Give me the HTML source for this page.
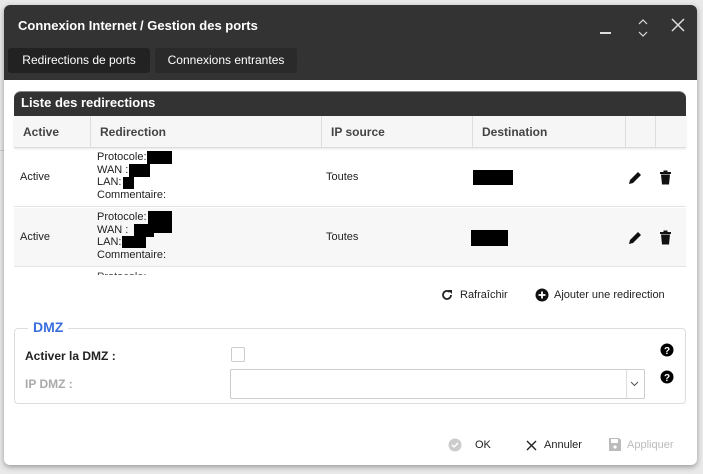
<!DOCTYPE html>
<html><head><style>
*{box-sizing:border-box;margin:0;padding:0}
body{width:703px;height:474px;background:#e9e9e9;font-family:"Liberation Sans",Arial,sans-serif;position:relative;overflow:hidden;font-size:12px;color:#222}
.a{position:absolute}
.dlg{left:4px;top:5px;width:693px;height:460px;background:#fff;border-radius:6px;box-shadow:0 2px 6px rgba(0,0,0,.35);overflow:hidden}
.blk{background:#000}
</style></head><body>
<div class="a" style="left:0;top:150px;width:4px;height:1px;background:#ccc"></div>
<div class="a dlg">
 <div class="a" style="left:0;top:0;width:693px;height:75px;background:#333"></div>
 <div class="a" style="left:14px;top:13px;color:#fff;font-weight:bold;font-size:13px">Connexion Internet / Gestion des ports</div>
 <div class="a" style="left:596px;top:27px;width:11px;height:1.5px;background:#ddd"></div>
 <svg class="a" style="left:633px;top:13px" width="12" height="20"><path d="M2 6l4-4 4 4M2 14l4 4 4-4" stroke="#ddd" fill="none" stroke-width="1.2"/></svg>
 <svg class="a" style="left:667px;top:13px" width="14" height="14"><path d="M1 1l12 12M13 1L1 13" stroke="#ddd" stroke-width="1.5"/></svg>
 <div class="a" style="left:4px;top:43px;width:142px;height:25px;background:#222;border-radius:3px;color:#fff;font-size:12px;line-height:25px;text-align:center">Redirections de ports</div>
 <div class="a" style="left:151px;top:43px;width:142px;height:25px;background:#2a2a2a;border-radius:3px;color:#fff;font-size:12px;line-height:25px;text-align:center">Connexions entrantes</div>

 <div class="a" style="left:10px;top:86px;width:672px;height:26px;background:#333;border-radius:7px 7px 0 0;border-top:1px solid #888;color:#fff;font-weight:bold;font-size:13px;padding:3px 0 0 7px">Liste des redirections</div>
 <div class="a" style="left:10px;top:111px;width:672px;height:32px;background:#f6f6f6;border-bottom:1px solid #ddd;box-shadow:0 1px 2px rgba(0,0,0,.1);font-weight:bold;color:#444;font-size:12px">
  <div class="a" style="left:9px;top:9px">Active</div>
  <div class="a" style="left:76px;top:0;height:32px;border-left:1px solid #ddd"></div>
  <div class="a" style="left:86px;top:9px">Redirection</div>
  <div class="a" style="left:307px;top:0;height:32px;border-left:1px solid #ddd"></div>
  <div class="a" style="left:317px;top:9px">IP source</div>
  <div class="a" style="left:458px;top:0;height:32px;border-left:1px solid #ddd"></div>
  <div class="a" style="left:468px;top:9px">Destination</div>
  <div class="a" style="left:611px;top:0;height:32px;border-left:1px solid #ddd"></div>
  <div class="a" style="left:641px;top:0;height:32px;border-left:1px solid #ddd"></div>
 </div>
 <div class="a" style="left:10px;top:143px;width:672px;height:59px;border-bottom:1px solid #e4e4e4;font-size:11px;line-height:12.5px">
  <div class="a" style="left:6px;top:23px">Active</div>
  <div class="a" style="left:83px;top:3px">Protocole:<br>WAN :<br>LAN:<br>Commentaire:</div>
  <div class="a blk" style="left:133px;top:3px;width:25px;height:13px"></div>
  <div class="a blk" style="left:115px;top:16px;width:21px;height:13px"></div>
  <div class="a blk" style="left:109px;top:29px;width:11px;height:12px"></div>
  <div class="a" style="left:312px;top:23px">Toutes</div>
  <div class="a blk" style="left:459px;top:22px;width:40px;height:15px"></div>
 </div>
 <div class="a" style="left:10px;top:203px;width:672px;height:59px;background:#f7f7f7;border-bottom:1px solid #e4e4e4;font-size:11px;line-height:12.5px">
  <div class="a" style="left:6px;top:23px">Active</div>
  <div class="a" style="left:83px;top:3px">Protocole:<br>WAN :<br>LAN:<br>Commentaire:</div>
  <div class="a blk" style="left:134px;top:3px;width:24px;height:22px"></div>
  <div class="a blk" style="left:120px;top:16px;width:20px;height:13px"></div>
  <div class="a blk" style="left:108px;top:28px;width:24px;height:12px"></div>
  <div class="a" style="left:312px;top:23px">Toutes</div>
  <div class="a blk" style="left:457px;top:22px;width:37px;height:16px"></div>
 </div>
 <div class="a" style="left:93px;top:266px;font-size:11px;height:4px;overflow:hidden;color:#444">Protocole:</div>
 <svg class="a" style="left:624px;top:165px" width="15" height="15"><path d="M1 14l1-4 8-8 3 3-8 8z" fill="#111"/></svg>
 <svg class="a" style="left:655px;top:165px" width="13" height="15"><path d="M1 2h11v2H1zM4.5 0.5h4v1.5h-4zM2 4.5h9l-1 10H3z" fill="#111"/></svg>
 <svg class="a" style="left:624px;top:225px" width="15" height="15"><path d="M1 14l1-4 8-8 3 3-8 8z" fill="#111"/></svg>
 <svg class="a" style="left:655px;top:225px" width="13" height="15"><path d="M1 2h11v2H1zM4.5 0.5h4v1.5h-4zM2 4.5h9l-1 10H3z" fill="#111"/></svg>

 <svg class="a" style="left:437px;top:284px" width="12" height="12"><path d="M10 6a4 4 0 1 1-1.3-3" stroke="#222" stroke-width="1.8" fill="none"/><path d="M7 1h4v4z" fill="#222"/></svg>
 <div class="a" style="left:456px;top:284px;font-size:11px">Rafraîchir</div>
 <svg class="a" style="left:531px;top:283px" width="14" height="14"><circle cx="7" cy="7" r="6.5" fill="#111"/><path d="M7 3.5v7M3.5 7h7" stroke="#fff" stroke-width="1.8"/></svg>
 <div class="a" style="left:550px;top:284px;font-size:11px">Ajouter une redirection</div>

 <div class="a" style="left:10px;top:323px;width:672px;height:76px;border:1px solid #ddd;border-radius:4px"></div>
 <div class="a" style="left:24px;top:314px;background:#fff;padding:0 5px;color:#3a6ee0;font-weight:bold;font-size:14px">DMZ</div>
 <div class="a" style="left:21px;top:344px;font-weight:bold;font-size:12px">Activer la DMZ :</div>
 <div class="a" style="left:227px;top:342px;width:14px;height:15px;border:1px solid #ccc;border-radius:2px"></div>
 <div class="a" style="left:21px;top:372px;font-weight:bold;font-size:12px;color:#aaa">IP DMZ :</div>
 <div class="a" style="left:226px;top:364px;width:415px;height:30px;border:1px solid #ccc;border-radius:2px"></div>
 <div class="a" style="left:622px;top:365px;height:28px;border-left:1px solid #ddd"></div>
 <svg class="a" style="left:626px;top:376px" width="9" height="6"><path d="M1 1l3.5 3.5L8 1" stroke="#555" fill="none"/></svg>
 <svg class="a" style="left:656px;top:338px" width="14" height="14"><circle cx="7" cy="7" r="6.5" fill="#000"/><text x="7" y="11" text-anchor="middle" fill="#fff" font-size="10" font-weight="bold" font-family="Liberation Sans">?</text></svg>
 <svg class="a" style="left:656px;top:365px" width="14" height="14"><circle cx="7" cy="7" r="6.5" fill="#000"/><text x="7" y="11" text-anchor="middle" fill="#fff" font-size="10" font-weight="bold" font-family="Liberation Sans">?</text></svg>

 <svg class="a" style="left:444px;top:433px" width="14" height="14"><circle cx="7" cy="7" r="6.5" fill="#ccc"/><path d="M4 7l2 2 4-4" stroke="#fff" stroke-width="1.5" fill="none"/></svg>
 <div class="a" style="left:471px;top:434px;font-size:11px">OK</div>
 <svg class="a" style="left:522px;top:435px" width="11" height="11"><path d="M1 1l9 9M10 1l-9 9" stroke="#222" stroke-width="1.4"/></svg>
 <div class="a" style="left:540px;top:434px;font-size:11px">Annuler</div>
 <svg class="a" style="left:605px;top:433px" width="12" height="13"><path d="M0 0h10l2 2v11H0z" fill="#bbb"/><rect x="2" y="1" width="7" height="4" fill="#fff"/><circle cx="6" cy="9" r="1.6" fill="#fff"/></svg>
 <div class="a" style="left:623px;top:434px;font-size:11px;color:#bbb">Appliquer</div>
</div>
</body></html>
